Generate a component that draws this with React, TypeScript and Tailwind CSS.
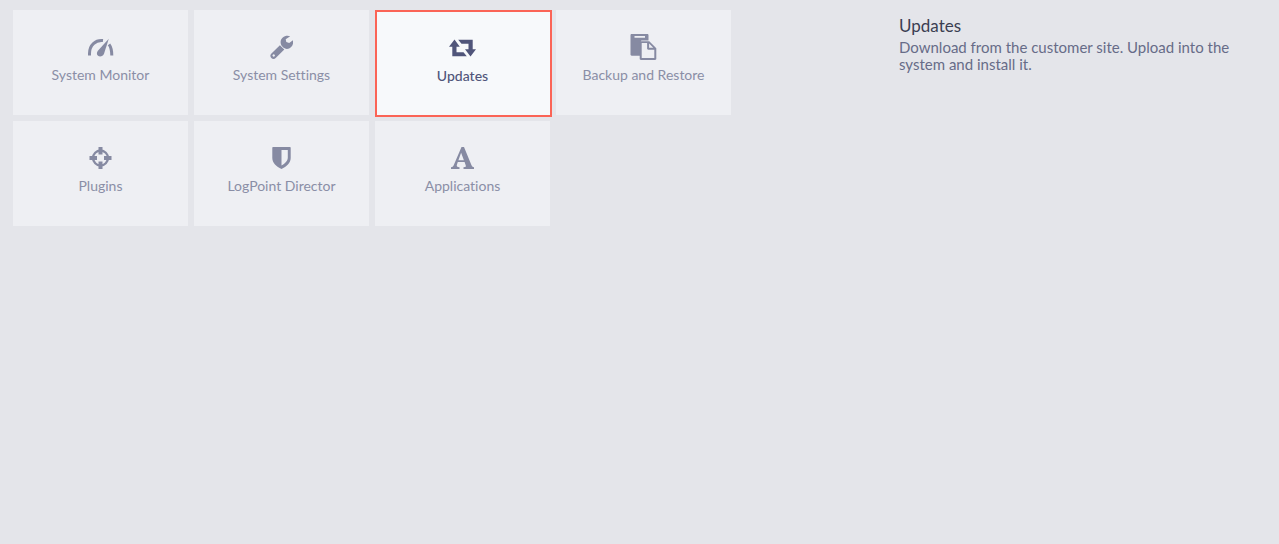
import React from 'react';

type Tile = { label: string; icon: React.ReactNode; active?: boolean };

const tiles: Tile[] = [
  {
    label: 'System Monitor',
    icon: (
      <svg width="27" height="24" viewBox="0 0 27 24" fill="none" aria-hidden="true">
        <path d="M2.500 20.500v-2C2.500 10 8.500 4.800 16 5.600" stroke="currentColor" strokeWidth="3" />
        <path d="M22 9.300c2 2.600 2.800 6 2.800 11.200" stroke="currentColor" strokeWidth="3" />
        <path d="M21.800 3.800 17 18.800C15.900 21.700 12.600 22.200 11 20.800 9.400 19.300 9.700 17.400 10.900 15.700Z" fill="currentColor" />
      </svg>
    ),
  },
  {
    label: 'System Settings',
    icon: (
      <svg width="23" height="24" viewBox="0 0 23 24" fill="currentColor" aria-hidden="true">
        <path d="M23 5.200 19.200 7.900 16.300 7 15.700 4.200 20.200 1.300C16.300-.4 10.600 2 10.600 7.300c0 3.500 3.200 6.600 6.400 6.600 4.300 0 7-4.300 6-8.700Z" />
        <path fillRule="evenodd" d="m9.900 10.200 4.400 4.400-8.600 8.500c-2.900 2.600-7.200-1.500-4.500-4.400ZM3.700 19.300a1.200 1.200 0 1 0 .01 0Z" />
      </svg>
    ),
  },
  {
    label: 'Updates',
    active: true,
    icon: (
      <svg width="27" height="24" viewBox="0 0 27 24" fill="currentColor" aria-hidden="true">
        <path d="M5.500 3.500 0 10.800h3.300v9.500H17.800L14.500 16.300H7.500V10.800H10.800Z" />
        <path d="M9.200 3.700H23.700v9.500H27L21.500 20.500 16 13.200h3.500V7.700h-7Z" />
      </svg>
    ),
  },
  {
    label: 'Backup and Restore',
    icon: (
      <svg width="27" height="26" viewBox="0 0 27 26" fill="currentColor" aria-hidden="true">
        <path fillRule="evenodd" d="M1.700 0h15.600c.7 0 1.200.5 1.200 1.200v5.300h-6.400c-.8 0-1.300.5-1.300 1.300v14H1.700C1 21.800.5 21.300.5 20.600V1.200C.5.500 1 0 1.700 0ZM4.500 1.900v1.900h10.500V1.900Z" />
        <path fillRule="evenodd" d="M11.200 7.200h8.100L26.300 14.300v10.500c0 .7-.5 1.200-1.200 1.200H10.900c-.7 0-1.200-.5-1.200-1.200V8.500c0-.8.600-1.300 1.500-1.300ZM11.700 9v15h12.600v-8.200h-6c-.7 0-1.200-.5-1.200-1.200V9Zm7.400.6v4.200h4.200Z" />
      </svg>
    ),
  },
  {
    label: 'Plugins',
    icon: (
      <svg width="23" height="24" viewBox="0.5 0 23 24" fill="none" stroke="currentColor" aria-hidden="true">
        <circle cx="12" cy="12" r="7.500" strokeWidth="2.300" />
        <path d="M12 1v7.500M12 15.500V23M1 12h7.500M15.500 12H23" strokeWidth="4" />
      </svg>
    ),
  },
  {
    label: 'LogPoint Director',
    icon: (
      <svg width="23" height="24" viewBox="0.5 0 23 24" fill="currentColor" aria-hidden="true">
        <path fillRule="evenodd" d="M3.500 1h17c.4 0 .7.300.7.700V12c0 5-4.200 8.700-9.200 11-5-2.300-9.200-6-9.200-11V1.700c0-.4.300-.7.700-.7ZM12 4v15.500c3.500-1.900 6.300-4.500 6.300-8V4Z" />
      </svg>
    ),
  },
  {
    label: 'Applications',
    icon: (
      <svg width="23" height="24" viewBox="0.5 0 23 24" fill="currentColor" aria-hidden="true">
        <path fillRule="evenodd" d="M11 1h2.500l7.400 18c.5 1.300 1.100 1.900 2.600 2.200V23H13v-1.800c2.200-.2 2.800-.5 2.200-2L14.100 16H7.300l-.9 2.700c-.5 1.600.2 2.200 2.600 2.500V23H.5v-1.800c1.700-.3 2.300-1 2.900-2.500ZM10.600 6.800 7.900 14.200h5.500Z" />
      </svg>
    ),
  },
];

function TileButton({ label, icon, active }: Tile) {
  return (
    <button
      type="button"
      aria-pressed={!!active}
      className={`relative flex h-[105px] flex-col items-center text-sm leading-5 ${
        active ? 'bg-[#f7f9fb] pt-[26px] font-medium text-[#50557a]' : 'bg-[#eeeff3] pt-[25px] text-[#8a8ea6]'
      }`}
    >
      {active && (
        <span className="absolute top-0 -right-0.5 -bottom-0.5 left-0 border-2 border-[#fb6456] bg-[#f7f9fb]" />
      )}
      <span className={`relative flex h-6 items-center ${active ? 'text-[#50557a]' : 'text-[#868aa2]'}`}>{icon}</span>
      <span className="relative mt-1.5 whitespace-nowrap">{label}</span>
    </button>
  );
}

export default function App() {
  return (
    <main className="flex min-h-screen items-start justify-between gap-8 bg-[#e4e5ea] pt-2.5 pl-[13px] font-['Lato','Noto_Sans',sans-serif] [font-variant-ligatures:none]">
      <nav aria-label="System" className="grid grid-cols-[repeat(4,175px)] gap-1.5">
        {tiles.map((tile) => (
          <TileButton key={tile.label} {...tile} />
        ))}
      </nav>
      <aside className="w-[380px] pt-1.5 pr-10">
        <h1 className="text-[17px] leading-5 text-[#3b3e52]">Updates</h1>
        <p className="mt-[3px] text-[15px] leading-[17px] text-[#676c88]">
          Download from the customer site. Upload into the system and install it.
        </p>
      </aside>
    </main>
  );
}
